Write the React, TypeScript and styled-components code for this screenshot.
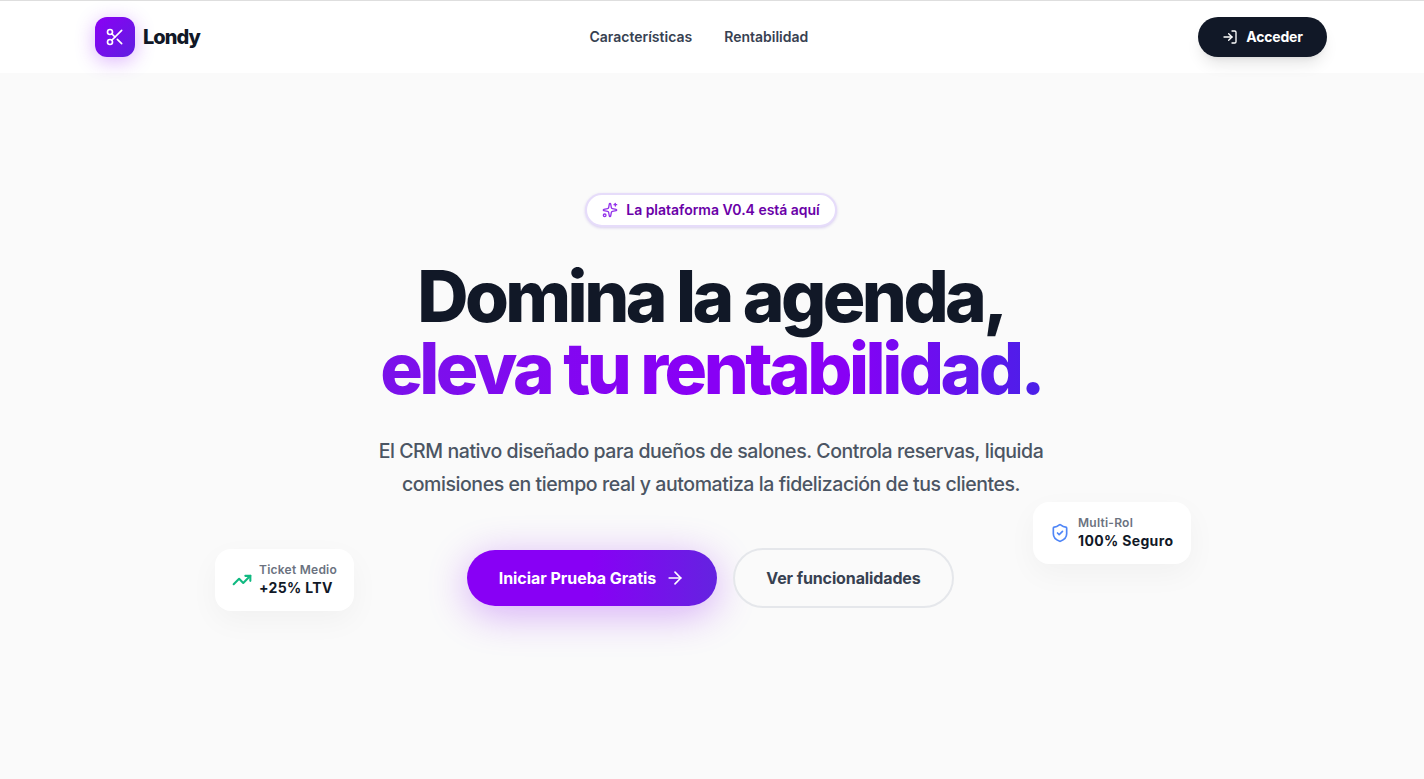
import React from 'react';
import styled, { createGlobalStyle } from 'styled-components';
import { ArrowRight, LogIn, Scissors, ShieldCheck, Sparkles, TrendingUp } from 'lucide-react';

const GlobalStyle = createGlobalStyle`
  * {
    box-sizing: border-box;
  }

  html,
  body {
    margin: 0;
    padding: 0;
    background-color: #fafafa;
    font-family: Inter, "Liberation Sans", sans-serif;
    -webkit-font-smoothing: antialiased;
  }
`;

const Page = styled.div`
  min-height: 779px;
  overflow: hidden;
  background-color: #fafafa;
`;

const Nav = styled.nav`
  height: 73px;
  padding: 0 97px 1px 95px;
  background-color: #fff;
  border-top: 1px solid #dedede;
  display: flex;
  align-items: center;
  justify-content: space-between;
`;

const Brand = styled.div`
  display: flex;
  align-items: center;
  gap: 8px;
`;

const LogoMark = styled.div`
  width: 40px;
  height: 40px;
  border-radius: 12px;
  display: flex;
  align-items: center;
  justify-content: center;
  color: #fff;
  background: linear-gradient(135deg, #8b00f5, #5f1fe0);
  box-shadow: 0 4px 20px rgba(138, 0, 245, 0.3);
`;

const BrandName = styled.span`
  font-size: 20px;
  font-weight: 800;
  letter-spacing: -1px;
  color: #111827;
`;

const NavLinks = styled.div`
  display: flex;
  gap: 32px;
`;

const NavLink = styled.a`
  font-size: 14px;
  font-weight: 600;
  color: #374151;
`;

const LoginButton = styled.button`
  width: 129px;
  height: 40px;
  padding-left: 6px;
  border: none;
  border-radius: 20px;
  display: flex;
  align-items: center;
  justify-content: center;
  gap: 8px;
  font: 700 14px Inter, sans-serif;
  letter-spacing: -0.2px;
  color: #fff;
  background-color: #111827;
  box-shadow: 0 10px 15px -3px rgba(0, 0, 0, 0.1), 0 4px 6px -4px rgba(0, 0, 0, 0.1);
`;

const Hero = styled.section`
  position: relative;
  margin: 0 97px 0 95px;
  padding-top: 120px;
  display: flex;
  flex-direction: column;
  align-items: center;
`;

const Badge = styled.div`
  height: 34px;
  padding: 0 15px 1px;
  border: 2px solid #e6dcfa;
  border-radius: 17px;
  display: flex;
  align-items: center;
  gap: 8px;
  font-size: 14px;
  font-weight: 600;
  letter-spacing: -0.02px;
  color: #6a00a8;
  background-color: #fff;
  box-shadow: 0 1px 3px rgba(90, 40, 200, 0.2);

  svg {
    color: #9333ea;
  }
`;

const Title = styled.h1`
  margin: 33px 0 0;
  font-size: 71px;
  line-height: 72px;
  font-weight: 800;
  letter-spacing: -3.55px;
  text-align: center;
  color: #111827;
`;

const Accent = styled.span`
  display: block;
  padding-bottom: 4px;
  margin-bottom: -4px;
  background: linear-gradient(90deg, #7a12ea 0%, #8800f5 45%, #8800f5 70%, #4a20e8 100%);
  -webkit-background-clip: text;
  background-clip: text;
  color: transparent;
`;

const Lead = styled.p`
  width: 680px;
  margin: 31px 0 0;
  font-size: 19.5px;
  line-height: 33px;
  font-weight: 500;
  letter-spacing: -0.43px;
  text-align: center;
  color: #4b5563;
`;

const Actions = styled.div`
  margin: 47px 1px 0 0;
  display: flex;
  align-items: center;
  gap: 16px;
`;

const PrimaryButton = styled.button`
  width: 250px;
  height: 56px;
  border: none;
  border-radius: 28px;
  display: flex;
  align-items: center;
  justify-content: center;
  gap: 9px;
  font: 700 16px Inter, sans-serif;
  letter-spacing: -0.05px;
  color: #fff;
  background: linear-gradient(90deg, #8800f5 0%, #8800f5 50%, #6423e0 100%);
  box-shadow: 0 8px 40px rgba(136, 0, 245, 0.32);
`;

const SecondaryButton = styled.button`
  width: 221px;
  height: 60px;
  border: 2px solid #e5e7eb;
  border-radius: 30px;
  font: 700 16px Inter, sans-serif;
  letter-spacing: -0.12px;
  color: #374151;
  background-color: #fafafa;
`;

const FloatCard = styled.div<{ $left: number; $top: number; $width: number; $gap: number }>`
  position: absolute;
  left: ${(p) => p.$left}px;
  top: ${(p) => p.$top}px;
  width: ${(p) => p.$width}px;
  height: 62px;
  padding-left: 17px;
  border-radius: 16px;
  display: flex;
  align-items: center;
  gap: ${(p) => p.$gap}px;
  background-color: #fff;
  box-shadow: 0 10px 30px rgba(0, 0, 0, 0.04);
`;

const CardText = styled.div`
  display: flex;
  flex-direction: column;
`;

const CardLabel = styled.span`
  font-size: 12px;
  line-height: 16px;
  font-weight: 600;
  letter-spacing: 0.25px;
  color: #6b7280;
`;

const CardValue = styled.span`
  font-size: 14px;
  line-height: 20px;
  font-weight: 700;
  letter-spacing: 0.35px;
  color: #111827;
`;

const App: React.FC = () => {
  return (
    <Page>
      <GlobalStyle />
      <Nav>
        <Brand>
          <LogoMark>
            <Scissors size={20} />
          </LogoMark>
          <BrandName>Londy</BrandName>
        </Brand>
        <NavLinks>
          <NavLink>Características</NavLink>
          <NavLink>Rentabilidad</NavLink>
        </NavLinks>
        <LoginButton>
          <LogIn size={16} />
          Acceder
        </LoginButton>
      </Nav>
      <Hero>
        <Badge>
          <Sparkles size={16} />
          La plataforma V0.4 está aquí
        </Badge>
        <Title>
          Domina la agenda,
          <Accent>eleva tu rentabilidad.</Accent>
        </Title>
        <Lead>
          El CRM nativo diseñado para dueños de salones. Controla reservas, liquida comisiones en
          tiempo real y automatiza la fidelización de tus clientes.
        </Lead>
        <Actions>
          <PrimaryButton>
            Iniciar Prueba Gratis
            <ArrowRight size={20} />
          </PrimaryButton>
          <SecondaryButton>Ver funcionalidades</SecondaryButton>
        </Actions>
        <FloatCard $left={120} $top={476} $width={139} $gap={7}>
          <TrendingUp size={20} strokeWidth={2.5} color="#10b981" />
          <CardText>
            <CardLabel>Ticket Medio</CardLabel>
            <CardValue>+25% LTV</CardValue>
          </CardText>
        </FloatCard>
        <FloatCard $left={938} $top={429} $width={158} $gap={8}>
          <ShieldCheck size={20} color="#4f86f7" />
          <CardText>
            <CardLabel>Multi-Rol</CardLabel>
            <CardValue>100% Seguro</CardValue>
          </CardText>
        </FloatCard>
      </Hero>
    </Page>
  );
};

export default App;
